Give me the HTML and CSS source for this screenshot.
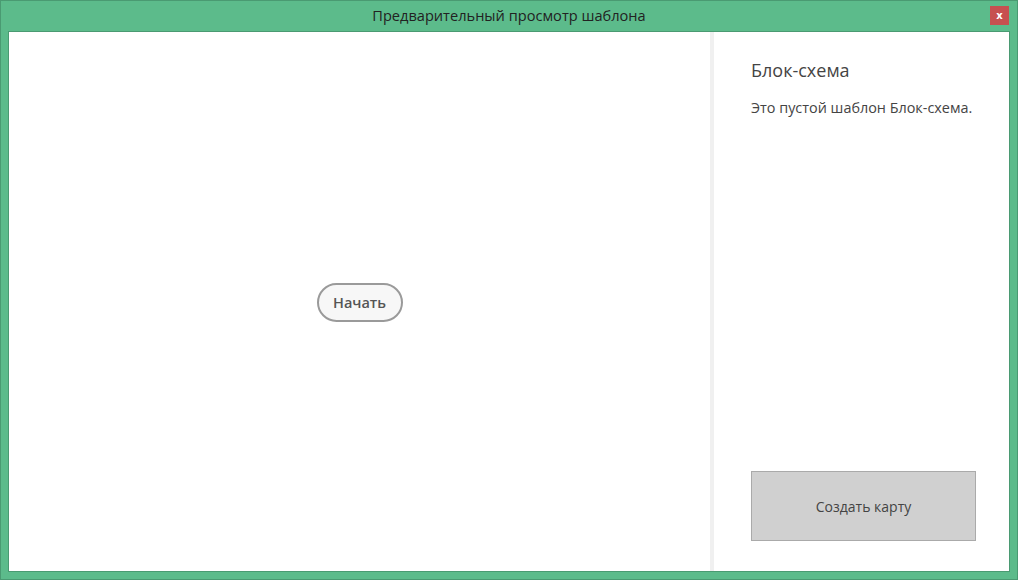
FILE: index.html
```html
<!DOCTYPE html>
<html lang="ru">
<head>
    <meta charset="UTF-8">
    <title>Предварительный просмотр шаблона</title>
    <link rel="stylesheet" href="styles.css">
</head>
<body>
    <div class="window">
        <div class="titlebar">
            <span class="title">Предварительный просмотр шаблона</span>
            <button class="close-btn">x</button>
        </div>
        <div class="content">
            <!-- Preview canvas -->
            <div class="preview">
                <div class="start-node">Начать</div>
            </div>
            <div class="divider"></div>
            <!-- Template info -->
            <div class="info">
                <h2>Блок-схема</h2>
                <p>Это пустой шаблон Блок-схема.</p>
                <button class="create-btn">Создать карту</button>
            </div>
        </div>
    </div>
</body>
</html>
```

FILE: styles.css
```css
body {
    margin: 0;
    font-family: "Open Sans", "Noto Sans", sans-serif;
    background: #5cbb8b;
}
.window {
    width: 1018px;
    height: 580px;
    box-sizing: border-box;
    border: 1px solid #4a9a72;
    background-color: #5cbb8b;
    display: flex;
    flex-direction: column;
    padding: 0 7px 7px 7px;
}
.titlebar {
    height: 30px;
    display: flex;
    align-items: center;
    justify-content: center;
    position: relative;
}
.title {
    font-size: 14.6px;
    color: #222;
    margin-top: -2px;
}
.close-btn {
    position: absolute;
    right: 1px;
    top: 5px;
    width: 19px;
    height: 19px;
    border: none;
    padding: 0;
    background-color: #c75050;
    color: white;
    font-family: "DejaVu Sans", sans-serif;
    font-weight: bold;
    font-size: 10px;
    line-height: 17px;
}
.content {
    flex: 1;
    display: flex;
    background: white;
    border: 1px solid #4a9a72;
}
.preview {
    width: 701px;
    display: flex;
    align-items: center;
    justify-content: center;
}
.start-node {
    margin: 1px 0 0 0;
    width: 86px;
    height: 39px;
    box-sizing: border-box;
    border: 2px solid #9a9a9a;
    border-radius: 20px;
    background: #f7f7f7;
    color: #555;
    font-size: 14.5px;
    font-weight: 600;
    display: flex;
    align-items: center;
    justify-content: center;
}
.divider {
    width: 4px;
    background: #f0f0f0;
}
.info {
    flex: 1;
    display: flex;
    flex-direction: column;
    padding: 26px 33px 30px 37px;
    color: #444;
}
.info h2 {
    margin: 0;
    font-size: 18px;
    font-weight: normal;
}
.info p {
    margin: 16px 0 0;
    font-size: 14.4px;
}
.create-btn {
    margin-top: auto;
    width: 225px;
    height: 70px;
    background-color: #d0d0d0;
    border: 1px solid #aaa;
    color: #444;
    font-family: inherit;
    font-size: 14px;
}
```
